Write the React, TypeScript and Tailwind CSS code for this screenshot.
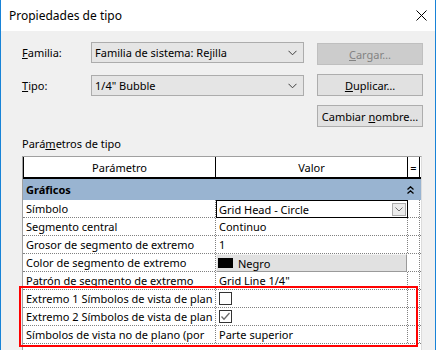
import React from "react";

function Chevron() {
  return (
    <svg width="9" height="6" viewBox="0 0 9 6">
      <path d="M0.5 0.8 L4.5 4.8 L8.5 0.8" stroke="#3c3c3c" fill="none" strokeWidth="1" />
    </svg>
  );
}

function SmallChevron() {
  return (
    <svg width="8" height="5" viewBox="0 0 8 5">
      <path d="M0.5 0.5 L4 4 L7.5 0.5" stroke="#707070" fill="none" strokeWidth="1" />
    </svg>
  );
}

function DoubleUp() {
  return (
    <svg width="7" height="8" viewBox="0 0 7 8">
      <path d="M0.5 3.5 L3.5 0.8 L6.5 3.5 M0.5 7.5 L3.5 4.8 L6.5 7.5" stroke="#000" fill="none" strokeWidth="1.3" />
    </svg>
  );
}

function Combo({ text }: { text: string }) {
  return (
    <div className="w-[213px] h-[21px] border border-[#acacac] bg-[#e5e5e5] flex items-center justify-between pl-[3px] pr-[6px]">
      <span>{text}</span>
      <Chevron />
    </div>
  );
}

type Row = { label: string; value: React.ReactNode; kind?: "combo" | "color" };

export default function App() {
  const cell1 = "w-[193px] shrink-0 border-r border-dotted border-[#808080] pl-[3px] overflow-hidden whitespace-nowrap flex items-center";
  const cell2 = "w-[192px] shrink-0 border-r border-dotted border-[#808080] flex items-center whitespace-nowrap";
  const cell3 = "w-[12px] shrink-0 border-r border-dotted border-[#808080]";

  const rows: Row[] = [
    {
      label: "Símbolo",
      kind: "combo",
      value: (
        <div className="relative z-10 self-start w-[192px] h-[18px] border border-black bg-white pl-[2px] flex items-center">
          <span>Grid Head - Circle</span>
          <div className="absolute right-[1px] top-[2px] w-[14px] h-[13px] border border-[#acacac] bg-[#ececec] flex items-center justify-center">
            <SmallChevron />
          </div>
        </div>
      ),
    },
    { label: "Segmento central", value: <span className="pl-[3px]">Continuo</span> },
    { label: "Grosor de segmento de extremo", value: <span className="pl-[3px]">1</span> },
    {
      label: "Color de segmento de extremo",
      kind: "color",
      value: (
        <div className="relative z-10 self-start w-[191px] h-[18px] bg-[#e1e1e1] border border-t-[#f4f4f4] border-l-[#f4f4f4] border-b-[#9a9a9a] border-r-[#9a9a9a] flex items-center pl-[1px]">
          <div className="w-[15px] h-[10px] bg-black" />
          <span className="ml-[5px]">Negro</span>
        </div>
      ),
    },
    { label: "Patrón de segmento de extremo", value: <span className="pl-[3px]">Grid Line 1/4"</span> },
    {
      label: "Extremo 1 Símbolos de vista de plan",
      value: <div className="ml-[3px] w-[13px] h-[13px] border border-[#333] bg-white" />,
    },
    {
      label: "Extremo 2 Símbolos de vista de plan",
      value: (
        <div className="ml-[3px] w-[13px] h-[13px] border border-[#333] bg-white flex items-center justify-center">
          <svg width="11" height="11" viewBox="0 0 11 11">
            <path d="M1.5 5.5 L4 8.2 L9.5 2" stroke="#6a6a6a" fill="none" strokeWidth="1.3" />
          </svg>
        </div>
      ),
    },
    { label: "Símbolos de vista no de plano (por", value: <span className="pl-[3px]">Parte superior</span> },
  ];

  return (
    <div className="relative w-[436px] h-[350px] overflow-hidden border-x border-[#1883d7] bg-[#f0f0f0] text-[11px] leading-none text-black font-['Noto_Sans',sans-serif]">
      {/* Title bar */}
      <div className="h-[31px] bg-white flex items-center justify-between pl-[8px] pr-[8px]">
        <span className="text-[12px]">Propiedades de tipo</span>
        <svg width="11" height="11" viewBox="0 0 11 11">
          <path d="M0.5 0.5 L10.5 10.5 M10.5 0.5 L0.5 10.5" stroke="#000" strokeWidth="1" />
        </svg>
      </div>

      <div className="pl-[21px] pt-[11px]">
        {/* Familia row */}
        <div className="flex items-start h-[22px]">
          <div className="w-[69px] h-[21px] flex items-center">
            <span><u>F</u>amilia:</span>
          </div>
          <Combo text="Familia de sistema: Rejilla" />
          <div className="ml-[13px] mt-[1px] w-[106px] h-[22px] border border-[#bfbfbf] bg-[#cccccc] text-[#838383] flex items-center justify-center">
            <span><u>C</u>argar…</span>
          </div>
        </div>

        {/* Tipo row */}
        <div className="flex items-start h-[22px] mt-[10px]">
          <div className="w-[69px] h-[21px] mt-[1px] flex items-center">
            <span><u>T</u>ipo:</span>
          </div>
          <div className="mt-[1px]">
            <Combo text={'1/4" Bubble'} />
          </div>
          <div className="ml-[13px] w-[106px] h-[22px] border border-[#adadad] bg-[#e1e1e1] flex items-center justify-center">
            <span><u>D</u>uplicar…</span>
          </div>
        </div>

        {/* Cambiar nombre */}
        <div className="flex h-[22px] mt-[9px] pl-[295px]">
          <div className="w-[106px] h-[22px] border border-[#adadad] bg-[#e1e1e1] flex items-center justify-center">
            <span>Cambiar <u>n</u>ombre…</span>
          </div>
        </div>

        {/* Label */}
        <div className="mt-[8px] h-[16px] flex items-center">
          <span>Pará<u>m</u>etros de tipo</span>
        </div>

        {/* Table */}
        <div className="mt-[5px] w-[400px] h-[220px] border-l border-t border-[#a0a0a0] border-r border-r-[#dcdcdc] bg-white">
          {/* header */}
          <div className="flex h-[22px] border-b-2 border-black">
            <div className="w-[193px] shrink-0 border-l border-r border-black flex items-center justify-center">
              <span>Parámetro</span>
            </div>
            <div className="w-[192px] shrink-0 border-r border-black flex items-center justify-center">
              <span>Valor</span>
            </div>
            <div className="w-[12px] shrink-0 border-r border-black flex items-center justify-center">
              <span>=</span>
            </div>
            <div className="flex-1" />
          </div>
          {/* group */}
          <div className="flex h-[21px] bg-[#99b4d1] items-center justify-between pl-[3px] pr-[7px]">
            <span className="font-bold">Gráficos</span>
            <DoubleUp />
          </div>
          {rows.map((r, i) => (
            <div key={i} className="flex h-[18px] border-b border-dotted border-[#808080]">
              <div className={cell1}>
                <span>{r.label}</span>
              </div>
              <div className={r.kind ? "w-[192px] shrink-0 flex whitespace-nowrap" : cell2}>{r.value}</div>
              <div className={cell3} />
              <div className="flex-1" />
            </div>
          ))}
        </div>
      </div>

      {/* Red highlight box */}
      <div className="absolute left-[18px] top-[286px] w-[399px] h-[61px] border-2 border-[#ff0000] pointer-events-none" />
    </div>
  );
}
